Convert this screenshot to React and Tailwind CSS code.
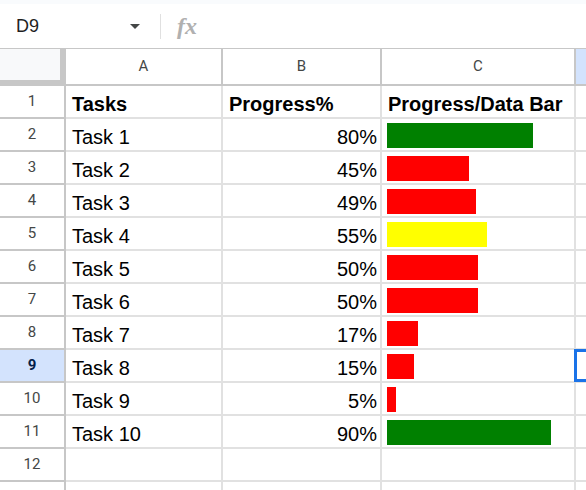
import React from 'react';

const rows = [
  { task: 'Task 1', pct: 80, color: 'bg-[#008000]' },
  { task: 'Task 2', pct: 45, color: 'bg-[#ff0000]' },
  { task: 'Task 3', pct: 49, color: 'bg-[#ff0000]' },
  { task: 'Task 4', pct: 55, color: 'bg-[#ffff00]' },
  { task: 'Task 5', pct: 50, color: 'bg-[#ff0000]' },
  { task: 'Task 6', pct: 50, color: 'bg-[#ff0000]' },
  { task: 'Task 7', pct: 17, color: 'bg-[#ff0000]' },
  { task: 'Task 8', pct: 15, color: 'bg-[#ff0000]' },
  { task: 'Task 9', pct: 5, color: 'bg-[#ff0000]' },
  { task: 'Task 10', pct: 90, color: 'bg-[#008000]' },
];

const BAR_MAX = 182;

function RowHeader({ n, selected }) {
  return (
    <div
      className={`w-[66px] shrink-0 flex items-center justify-center border-r-2 border-b-2 border-[#c7c7c7] font-['Roboto',sans-serif] text-[15px] leading-none ${
        selected ? 'bg-[#d3e3fd] text-[#041e49] font-bold' : 'bg-white text-[#444746]'
      }`}
    >
      {n}
    </div>
  );
}

function Row({ n, a, b, c, bold, selected }) {
  return (
    <div className="flex h-[33px] text-[20px] leading-[22px] text-black">
      <RowHeader n={n} selected={selected} />
      <div className={`w-[157px] shrink-0 flex items-end pb-[2px] pl-[6px] border-r-2 border-b-2 border-[#e1e1e1] ${bold ? 'font-bold' : ''}`}>
        {a}
      </div>
      <div className={`w-[159px] shrink-0 flex items-end pb-[2px] border-r-2 border-b-2 border-[#e1e1e1] ${bold ? 'font-bold pl-[6px]' : 'justify-end pr-[3px]'}`}>
        {b}
      </div>
      <div className="w-[194px] shrink-0 border-r-2 border-b-2 border-[#e1e1e1]">{c}</div>
      <div className="relative flex-1 border-b-2 border-[#e1e1e1]">
        {selected && (
          <div className="absolute left-[-2px] top-[-1px] w-[20px] h-[33px] border-[3px] border-[#1a73e8]"></div>
        )}
      </div>
    </div>
  );
}

export default function App() {
  return (
    <div className="w-[586px] h-[490px] overflow-hidden bg-white font-['Liberation_Sans',Arial,sans-serif]">
      <div className="h-[4px] bg-[#f9fbfd]"></div>

      {/* formula bar */}
      <div className="h-[45px] flex items-center border-b border-[#c7c7c7]">
        <div className="w-[160px] flex items-center justify-between pl-[16px] pr-[20px]">
          <span className="text-[18px] text-[#1f1f1f]">D9</span>
          <svg width="10" height="5" viewBox="0 0 10 5">
            <path d="M0 0h10L5 5z" fill="#444746" />
          </svg>
        </div>
        <div className="w-px h-[25px] bg-[#e0e0e0]"></div>
        <span className="ml-[16px] font-['Liberation_Serif',serif] italic font-bold text-[24px] text-[#b0b0b0] leading-none">
          fx
        </span>
      </div>

      {/* column headers */}
      <div className="flex h-[37px] border-b-2 border-[#c7c7c7] font-['Roboto',sans-serif] text-[15px] text-[#444746]">
        <div className="w-[66px] shrink-0 bg-[#c7c7c7]">
          <div className="w-[60px] h-[31px] bg-[#f8f9fa]"></div>
        </div>
        <div className="w-[157px] shrink-0 flex items-center justify-center border-r-2 border-[#c7c7c7]">A</div>
        <div className="w-[159px] shrink-0 flex items-center justify-center border-r-2 border-[#c7c7c7]">B</div>
        <div className="w-[194px] shrink-0 flex items-center justify-center border-r-2 border-[#c7c7c7]">C</div>
        <div className="flex-1 bg-[#d3e3fd]"></div>
      </div>

      <Row n={1} a="Tasks" b="Progress%" c={<div className="h-full flex items-end pb-[2px] pl-[6px] font-bold">Progress/Data Bar</div>} bold />
      {rows.map((r, i) => (
        <Row
          key={r.task}
          n={i + 2}
          a={r.task}
          b={`${r.pct}%`}
          selected={i + 2 === 9}
          c={
            <div className="pl-[5px] pt-[4px]">
              <div className={`h-[25px] ${r.color}`} style={{ width: Math.round((r.pct / 100) * BAR_MAX) }}></div>
            </div>
          }
        />
      ))}
      <Row n={12} a="" b="" c="" />
      <Row n="" a="" b="" c="" />
    </div>
  );
}
